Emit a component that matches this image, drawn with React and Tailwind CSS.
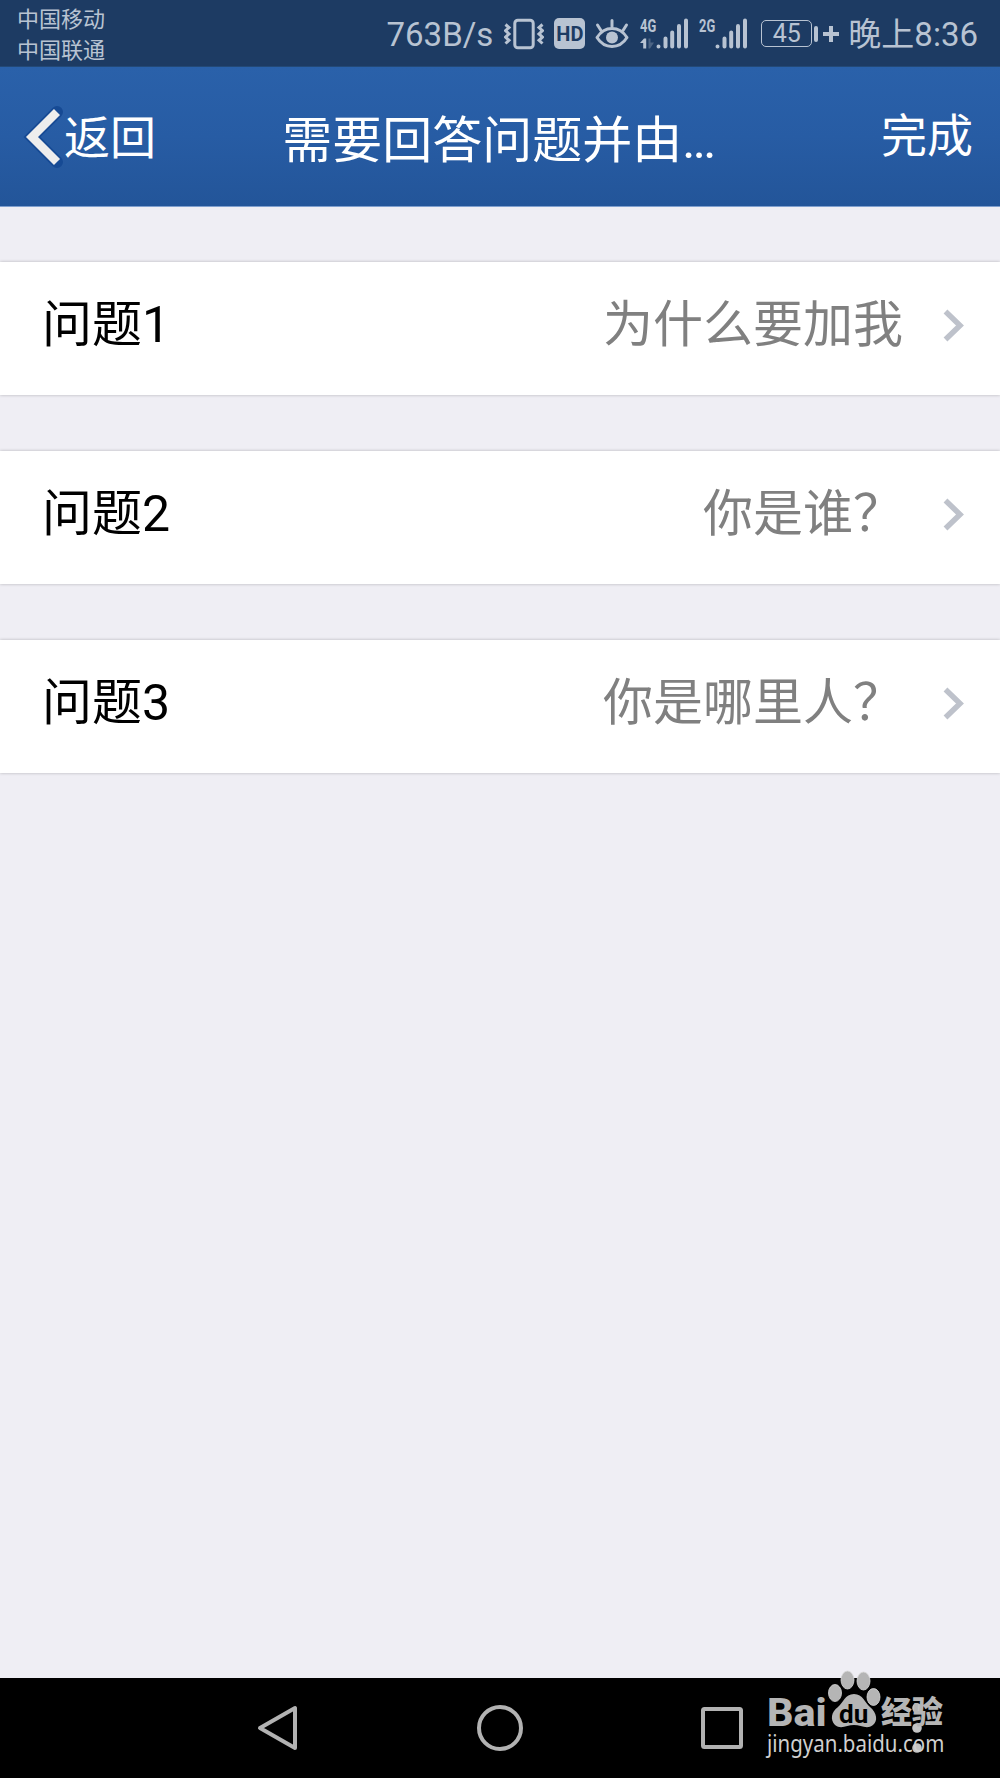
import clsx from 'clsx';

const questions = [
  { id: 1, label: '问题1', answer: '为什么要加我' },
  { id: 2, label: '问题2', answer: '你是谁？' },
  { id: 3, label: '问题3', answer: '你是哪里人？' },
];

const VibrateIcon = () => (
  <svg width="40" height="32" viewBox="0 0 40 32" fill="none" stroke="currentColor">
    <rect x="10.8" y="2.3" width="18.4" height="27.4" rx="3" strokeWidth="3" />
    <path d="M1.500 6.500l3.500 3-3.500 3.200 3.500 3.200-3.500 3.200 3.500 3.200-3.500 3.200" strokeWidth="3" />
    <path d="M38.500 6.500l-3.500 3 3.500 3.200-3.500 3.200 3.500 3.200-3.500 3.200 3.500 3.200" strokeWidth="3" />
  </svg>
);

const EyeIcon = () => (
  <svg width="34" height="32" viewBox="0 0 34 32" fill="none" stroke="currentColor" strokeLinecap="round">
    <path d="M2 19.500C9.500 7.500 24.500 7.500 32 19.500C24.500 31.500 9.500 31.500 2 19.500Z" strokeWidth="3" strokeLinejoin="round" />
    <circle cx="17" cy="19.500" r="6" fill="currentColor" stroke="none" />
    <path d="M17 2.500v6M2.500 7l3.500 5.500M31.500 7l-3.500 5.500" strokeWidth="3" />
  </svg>
);

const Signal = ({ label, data }) => (
  <div className="relative h-8 w-12">
    <span className="absolute left-0 top-0 origin-left scale-x-[.68] text-[19px] font-bold leading-4">{label}</span>
    <svg className="absolute inset-0" width="48" height="32" viewBox="0 0 48 32">
      {data && (
        <>
          <path d="M0 25L4 20.500H6.200V30.500H3.200V25Z" fill="currentColor" />
          <path d="M8.500 20.500H10.500V24.500H14L10 30.500H8.500Z" fill="currentColor" opacity=".3" />
        </>
      )}
      <g stroke="currentColor" strokeWidth="4" strokeLinecap="round">
        <path d="M18.500 28.500v.1M25.500 20.500v8M32.200 14.500v14M39 8v20.500M46 2.500v26" />
      </g>
    </svg>
  </div>
);

const StatusBar = () => (
  <div className="flex h-[67px] items-start justify-between border-b border-[#234977] bg-[#1d3b63] pl-[17px] pr-[22px] text-[#b8c3d2]">
    <div className="pt-1 text-[22px] leading-[31px]">
      <p>中国移动</p>
      <p>中国联通</p>
    </div>
    <div className="flex h-[67px] items-center">
      <span className="mr-[11px] pt-[3px] text-[33px] leading-10">763B/s</span>
      <VibrateIcon />
      <span className="ml-[10px] flex h-[31px] w-[31px] items-center justify-center rounded-[5px] bg-[#b8c3d2] text-[20px] font-bold text-[#1d3b63]">HD</span>
      <div className="ml-[10px]"><EyeIcon /></div>
      <div className="ml-[11px]"><Signal label="4G" data /></div>
      <div className="ml-[11px]"><Signal label="2G" /></div>
      <div className="ml-[14px] flex h-[27px] w-[51px] items-center justify-center rounded-[5px] border-[1.500px] border-current text-[25px]">45</div>
      <div className="ml-[2px] h-4 w-1 rounded-full bg-[#b8c3d2]" />
      <svg className="ml-[5px] mr-[9px]" width="16" height="16" viewBox="0 0 16 16" stroke="currentColor" strokeWidth="4">
        <path d="M8 0v16M0 8h16" />
      </svg>
      <span className="pt-[3px] text-[33px] leading-10">晚上8:36</span>
    </div>
  </div>
);

const Header = () => (
  <header className="flex h-[140px] items-center justify-between border-b border-[#7f9fce] bg-linear-to-b from-[#2a61aa] via-[#275ca4] to-[#235599] pl-[23px] pr-[27px] text-white">
    <button className="flex w-[250px] items-center text-[46px] leading-[60px]">
      <svg className="mr-px" width="40" height="64" viewBox="0 0 40 64" fill="none">
        <path d="M34 7L9 32L34 57" stroke="#164a94" strokeWidth="12" strokeLinecap="round" />
        <path d="M34 7L9 32L34 57" stroke="#ededed" strokeWidth="8.500" />
      </svg>
      <span className="pt-[2px]">返回</span>
    </button>
    <h1 className="pt-[8px] text-[50px] leading-[60px]">
      需要回答问题并由<span className="tracking-[-2.700px]">...</span>
    </h1>
    <button className="w-[250px] pb-[2px] text-right text-[46px] leading-[60px]">完成</button>
  </header>
);

const QuestionRow = ({ label, answer, first }) => (
  <button className={clsx('flex h-[133px] w-full items-center bg-white pb-[7px] pl-[42px] pr-[36px] text-[50px] leading-[60px] shadow-[0_0_3px_rgba(0,0,0,0.25)]', !first && 'mt-14')}>
    <span className="text-black">{label}</span>
    <span className="ml-auto text-[#808080]">{answer}</span>
    <svg className="ml-[40px] mt-px" width="21" height="33" viewBox="0 0 21 33" fill="none">
      <path d="M2.500 2.500L17 16.500L2.500 30.500" stroke="#bec2cb" strokeWidth="5.500" />
    </svg>
  </button>
);

const Watermark = () => (
  <div className="absolute left-[766px] top-[-10px] h-[100px] w-[190px] text-[#b5b5b5]">
    <span className="absolute left-[1px] top-[29px] origin-left scale-x-[1.060] text-[39px] font-extrabold leading-8">Bai</span>
    <svg className="absolute left-[61px] top-0" width="54" height="62" viewBox="0 0 54 62" fill="currentColor">
      <g stroke="#d8d8d8" strokeWidth=".8">
        <ellipse cx="8" cy="25" rx="6.500" ry="8.500" />
        <ellipse cx="20.500" cy="12" rx="6.500" ry="9" />
        <ellipse cx="36.500" cy="13" rx="6.500" ry="9" />
        <ellipse cx="46.500" cy="29" rx="6.500" ry="8.500" />
      </g>
      <path d="M27 26C36 26 38 35 43 39C50 45 51 53 46 57C40 62 34 57 27 57C20 57 14 62 8 57C3 52 4 44 11 39C16 35 18 26 27 26Z" />
    </svg>
    <span className="absolute left-[73px] top-[33px] text-[26px] font-bold leading-[26px] text-black">du</span>
    <span className="absolute left-[115px] top-[25px] text-[31px] font-black leading-10">经验</span>
    <span className="absolute left-[1px] top-[61px] origin-left scale-x-[.890] font-['Noto_Sans'] text-[23px] leading-[28px] text-[#d0d0d0]">jingyan.baidu.com</span>
  </div>
);

const NavBar = () => (
  <nav className="relative flex h-[100px] items-center bg-black pl-[257px] text-[#b2b2b2]">
    <svg width="42" height="48" viewBox="0 0 42 48" fill="none" stroke="currentColor" strokeWidth="4" strokeLinejoin="round">
      <path d="M38 4V44L3 24Z" />
    </svg>
    <svg className="ml-[177px]" width="48" height="48" viewBox="0 0 48 48" fill="none" stroke="currentColor" strokeWidth="4">
      <circle cx="24" cy="24" r="21" />
    </svg>
    <svg className="ml-[176px]" width="44" height="44" viewBox="0 0 44 44" fill="none" stroke="currentColor" strokeWidth="4">
      <rect x="3" y="3" width="38" height="38" rx="1.500" />
    </svg>
    <svg className="ml-[167px]" width="12" height="52" viewBox="0 0 12 52" fill="#c4c4c4">
      <circle cx="6" cy="6" r="4.800" />
      <circle cx="6" cy="26" r="4.800" />
      <circle cx="6" cy="46" r="4.800" />
    </svg>
    <Watermark />
  </nav>
);

export default function App() {
  return (
    <div lang="zh-CN" className="flex h-[1778px] w-[1000px] flex-col overflow-hidden bg-[#efeef4] font-[Roboto,'Noto_Sans_CJK_SC',sans-serif]">
      <StatusBar />
      <Header />
      <main className="flex-1 pt-[55px]">
        {questions.map((q, i) => (
          <QuestionRow key={q.id} label={q.label} answer={q.answer} first={i === 0} />
        ))}
      </main>
      <NavBar />
    </div>
  );
}
